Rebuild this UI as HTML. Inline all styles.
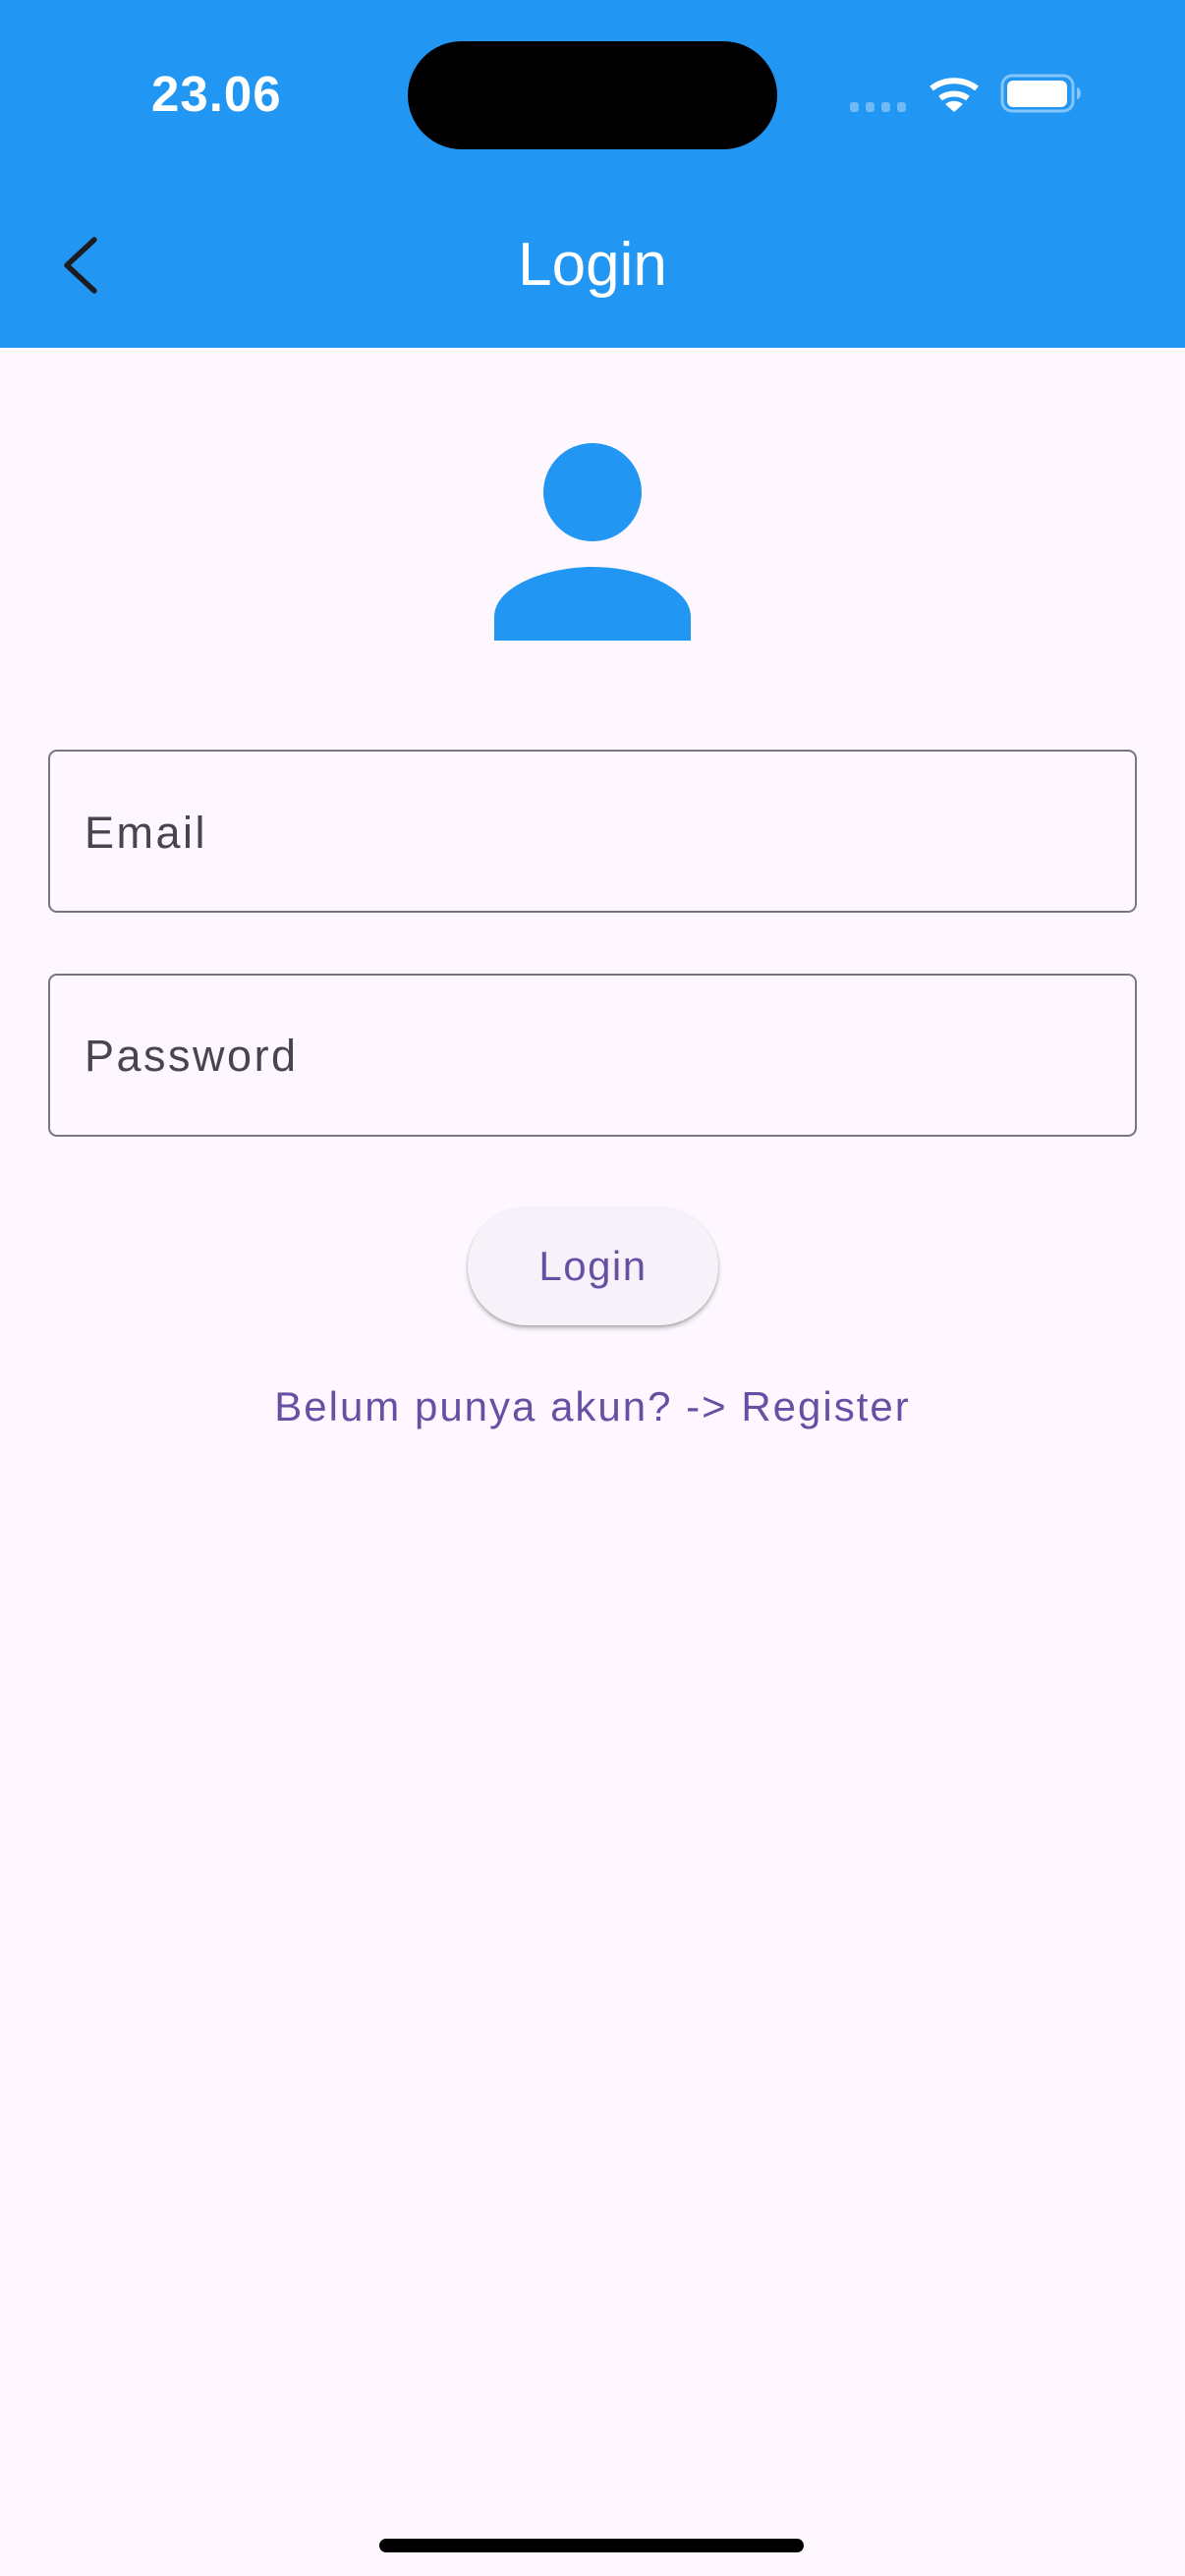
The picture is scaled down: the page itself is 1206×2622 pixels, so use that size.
<!DOCTYPE html>
<html><head><meta charset="utf-8">
<style>
html,body{margin:0;padding:0}
body{width:1206px;height:2622px;background:#FEF7FF;position:relative;overflow:hidden;font-family:"Liberation Sans",sans-serif}
.abs{position:absolute}
.bar{left:0;top:0;width:1206px;height:354px;background:#2196F3}
.time{left:154px;top:66px;font-size:51px;font-weight:bold;color:#fff;letter-spacing:1px}
.island{left:415px;top:42px;width:376px;height:110px;border-radius:55px;background:#000}
.title{left:0;width:1206px;text-align:center;top:233px;font-size:62px;color:#fff;line-height:74px}
.field{left:49px;width:1108px;height:166px;border:2px solid #79747E;border-radius:9px;box-sizing:border-box}
.lbl{left:86px;font-size:45px;color:#49454F;letter-spacing:2.5px}
.btn{left:476px;top:1229px;width:255px;height:120px;border-radius:60px;background:#F7F2FA;box-shadow:0 3px 5px rgba(0,0,0,0.25),0 1px 2px rgba(0,0,0,0.15);text-align:center;line-height:120px;font-size:42px;color:#6750A4;letter-spacing:1.5px}
.reg{left:0;width:1206px;text-align:center;top:1408px;font-size:42px;color:#6750A4;letter-spacing:2px}
.home{left:386px;top:2584px;width:432px;height:14px;border-radius:7px;background:#000}
</style></head><body>
<div class="abs bar"></div>
<div class="abs time">23.06</div>
<div class="abs island"></div>
<svg class="abs" style="left:850px;top:60px" width="260" height="70" viewBox="0 0 260 70">
  <g fill="#fff" opacity="0.35">
    <rect x="15" y="44" width="9" height="10" rx="3"/>
    <rect x="31" y="44" width="9" height="10" rx="3"/>
    <rect x="47" y="44" width="9" height="10" rx="3"/>
    <rect x="63" y="44" width="9" height="10" rx="3"/>
  </g>
  <g fill="none" stroke="#fff" stroke-width="6" stroke-linecap="butt">
    <path d="M98 30 A38 38 0 0 1 144 30"/>
    <path d="M107 40 A24 24 0 0 1 135 40"/>
  </g>
  <path d="M121 54 L112 46 A14 14 0 0 1 130 46 Z" fill="#fff"/>
  <rect x="170" y="17" width="72" height="36" rx="10" fill="none" stroke="#fff" stroke-opacity="0.45" stroke-width="3"/>
  <rect x="175" y="22" width="61" height="27" rx="6" fill="#fff"/>
  <path d="M246 29 a4 6 0 0 1 0 12 z" fill="#fff" opacity="0.45"/>
</svg>
<svg class="abs" style="left:60px;top:236px" width="50" height="68" viewBox="0 0 50 68">
  <path d="M38 8 L10 34 L38 60" fill="none" stroke="#1d1b20" stroke-width="5.5" stroke-linecap="round" stroke-linejoin="round" transform="translate(-2,0)"/>
</svg>
<div class="abs title">Login</div>
<svg class="abs" style="left:500px;top:448px" width="206" height="206" viewBox="0 0 206 206">
  <circle cx="103" cy="53" r="50" fill="#2196F3"/>
  <path d="M3 204 V180 C3 148 58 129 103 129 C148 129 203 148 203 180 V204 Z" fill="#2196F3"/>
</svg>
<div class="abs field" style="top:763px"></div>
<div class="abs lbl" style="top:822px">Email</div>
<div class="abs field" style="top:991px"></div>
<div class="abs lbl" style="top:1049px">Password</div>
<div class="abs btn">Login</div>
<div class="abs reg">Belum punya akun? -&gt; Register</div>
<div class="abs home"></div>
</body></html>
